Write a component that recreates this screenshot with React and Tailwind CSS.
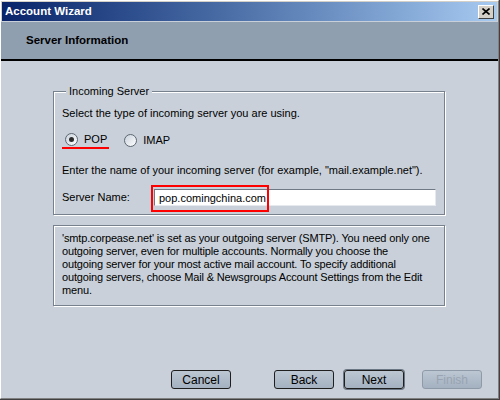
import React, { useState } from 'react';

const Radio = ({ checked }) => (
  <span className="w-[13px] h-[13px] rounded-full border border-[#5d6773] bg-linear-to-br from-[#c9d2dc] to-[#ffffff] flex items-center justify-center shrink-0">
    {checked && <span className="w-[5px] h-[5px] rounded-full bg-[#2b2b2b]" />}
  </span>
);

const WizButton = ({ children, focused, disabled }) => (
  <button
    disabled={disabled}
    className={`w-[60px] h-[19px] rounded-[3px] border text-[12px] leading-none flex items-center justify-center bg-linear-to-b from-[#bcc7d3] to-[#a4b1c0] ${
      disabled
        ? 'border-[#8f9aa8] text-[#98a4b2]'
        : 'border-[#1f1f1f] text-black'
    } ${focused ? 'shadow-[0_0_0_1px_#6b7684]' : ''}`}
  >
    {children}
  </button>
);

const noteLines = [
  "'smtp.corpease.net' is set as your outgoing server (SMTP). You need only one",
  'outgoing server, even for multiple accounts. Normally you choose the',
  'outgoing server for your most active mail account. To specify additional',
  'outgoing servers, choose Mail & Newsgroups Account Settings from the Edit',
  'menu.',
];

const App = () => {
  const [server, setServer] = useState('pop.comingchina.com');
  const [type, setType] = useState('pop');

  return (
    <div className="w-[500px] h-[400px] bg-[#d4d0c8] border-r border-b border-[#404040] font-['Liberation_Sans',Arial,sans-serif] text-[11px] text-black">
      <div className="w-full h-full border-t border-l border-white border-r border-b border-r-[#808080] border-b-[#808080] flex flex-col">
        {/* title bar */}
        <div className="h-[19px] mx-[1px] mt-[1px] bg-linear-to-r from-[#0a246a] to-[#a6caf0] flex items-center pl-[3px] pr-[3px]">
          <span className="text-white font-bold text-[11.5px] leading-none">Account Wizard</span>
          <button className="ml-auto w-[16px] h-[14px] bg-[#d4d0c8] border border-t-white border-l-white border-r-[#404040] border-b-[#404040] flex items-center justify-center">
            <svg width="8" height="7" viewBox="0 0 8 7">
              <path d="M0.5 0.5 L7.5 6.5 M7.5 0.5 L0.5 6.5" stroke="#000" strokeWidth="1.6" />
            </svg>
          </button>
        </div>

        {/* page header */}
        <div className="h-[40px] bg-[#909fb0] border-t border-[#c8cfd8] border-b-2 border-b-black flex items-center pl-[25px]">
          <span className="font-bold text-[11.5px]">Server Information</span>
        </div>

        {/* page body */}
        <div className="flex-1 bg-[#c9d0d9] flex flex-col">
          <fieldset className="mt-[23px] ml-[52px] w-[392px] border border-[#77818d] shadow-[inset_1px_1px_0_#fff,1px_1px_0_#fff] px-[8px] pt-[8px] pb-[8px]">
            <legend className="ml-[4px] px-[3px] leading-[14px] bg-[#c9d0d9]">Incoming Server</legend>
            <div className="leading-[14px]">Select the type of incoming server you are using.</div>

            <div className="mt-[12px] flex items-center">
              <label
                className="flex items-center gap-[6px] pl-[3px] pr-[2px] h-[17px] border-b-2 border-[#ff0000]"
                onClick={() => setType('pop')}
              >
                <Radio checked={type === 'pop'} />
                <span className="leading-none">POP</span>
              </label>
              <label className="flex items-center gap-[6px] ml-[15px] h-[17px]" onClick={() => setType('imap')}>
                <Radio checked={type === 'imap'} />
                <span className="leading-none">IMAP</span>
              </label>
            </div>

            <div className="mt-[14px] leading-[14px]">
              Enter the name of your incoming server (for example, "mail.example.net").
            </div>

            <div className="mt-[12px] flex items-center">
              <span className="w-[92px]">Server Name:</span>
              <div className="relative flex-1">
                <input
                  value={server}
                  onChange={(e) => setServer(e.target.value)}
                  className="w-full h-[17px] bg-white border border-t-[#6f7985] border-l-[#6f7985] border-r-[#e6e9ee] border-b-[#e6e9ee] px-[4px] text-[11px] outline-none"
                />
                <div className="absolute left-[-3px] top-[-4px] w-[118px] h-[27px] border-2 border-[#ff0000] pointer-events-none" />
              </div>
            </div>
          </fieldset>

          <div className="mt-[10px] ml-[52px] w-[392px] border border-[#77818d] shadow-[inset_1px_1px_0_#fff,1px_1px_0_#fff] px-[8px] pt-[6px] pb-[8px] leading-[13px] tracking-[-0.15px]">
            {noteLines.map((line) => (
              <div key={line} className="whitespace-nowrap">{line}</div>
            ))}
          </div>

          <div className="mt-auto pb-[9px] flex">
            <div className="ml-[170px]"><WizButton>Cancel</WizButton></div>
            <div className="ml-[43px]"><WizButton>Back</WizButton></div>
            <div className="ml-[10px]"><WizButton focused>Next</WizButton></div>
            <div className="ml-[18px]"><WizButton disabled>Finish</WizButton></div>
          </div>
        </div>
      </div>
    </div>
  );
};

export default App;
